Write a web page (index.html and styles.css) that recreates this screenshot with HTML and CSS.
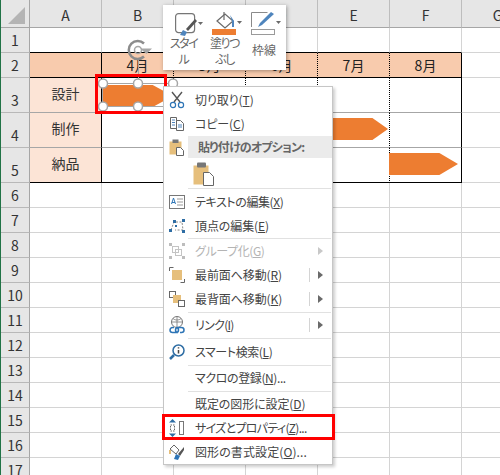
FILE: index.html
```html
<!DOCTYPE html>
<html lang="ja">
<head>
<meta charset="UTF-8">
<title>図形の右クリックメニュー</title>
<link rel="stylesheet" href="styles.css">
</head>
<body>
<div class="sheet">
  <table class="cells">
    <tr class="head"><th class="corner"><span class="corner-mark"></span></th><th>A</th><th>B</th><th>C</th><th>D</th><th>E</th><th>F</th><th>G</th></tr>
    <tr class="r25 top"><th>1</th><td></td><td></td><td></td><td></td><td></td><td></td><td class="free"></td></tr>
    <tr class="r25 months"><th>2</th><td class="a"></td><td class="m">4月</td><td class="m">5月</td><td class="m">6月</td><td class="m">7月</td><td class="m last">8月</td><td class="free"></td></tr>
    <tr class="r35 plan"><th>3</th><td class="a name">設計</td><td></td><td></td><td></td><td></td><td class="last"></td><td class="free"></td></tr>
    <tr class="r35 plan"><th>4</th><td class="a name">制作</td><td></td><td></td><td></td><td></td><td class="last"></td><td class="free"></td></tr>
    <tr class="r35 plan end"><th>5</th><td class="a name">納品</td><td></td><td></td><td></td><td></td><td class="last"></td><td class="free"></td></tr>
    <tr class="r25"><th>6</th><td></td><td></td><td></td><td></td><td></td><td></td><td></td></tr>
    <tr class="r25"><th>7</th><td></td><td></td><td></td><td></td><td></td><td></td><td></td></tr>
    <tr class="r25"><th>8</th><td></td><td></td><td></td><td></td><td></td><td></td><td></td></tr>
    <tr class="r25"><th>9</th><td></td><td></td><td></td><td></td><td></td><td></td><td></td></tr>
    <tr class="r25"><th>10</th><td></td><td></td><td></td><td></td><td></td><td></td><td></td></tr>
    <tr class="r25"><th>11</th><td></td><td></td><td></td><td></td><td></td><td></td><td></td></tr>
    <tr class="r25"><th>12</th><td></td><td></td><td></td><td></td><td></td><td></td><td></td></tr>
    <tr class="r25"><th>13</th><td></td><td></td><td></td><td></td><td></td><td></td><td></td></tr>
    <tr class="r25"><th>14</th><td></td><td></td><td></td><td></td><td></td><td></td><td></td></tr>
    <tr class="r25"><th>15</th><td></td><td></td><td></td><td></td><td></td><td></td><td></td></tr>
    <tr class="r25"><th>16</th><td></td><td></td><td></td><td></td><td></td><td></td><td></td></tr>
    <tr class="r25"><th>17</th><td></td><td></td><td></td><td></td><td></td><td></td><td></td></tr>
  </table>

  <!-- shapes on the sheet -->
  <div class="arrow arrow-b"></div>
  <div class="arrow arrow-e"></div>
  <div class="arrow arrow-f"></div>

  <svg class="selection" width="90" height="80" viewBox="0 0 90 80">
    <rect x="5.500" y="48.500" width="70" height="23" fill="none" stroke="#a6a6a6"/>
    <line x1="41.500" y1="24" x2="41.500" y2="48" stroke="#a6a6a6"/>
    <path d="M47 8.500A9 9 0 1 0 47 21.500" fill="none" stroke="#8c8c8c" stroke-width="2.500"/>
    <circle cx="41" cy="15" r="3.500" fill="none" stroke="#a6a6a6" stroke-width="1.500"/>
    <path d="M43 13.500h12l-5.500 5.500z" fill="#a6a6a6"/>
    <g fill="#fff" stroke="#a6a6a6" stroke-width="1.500">
      <circle cx="6" cy="48.500" r="4.500"/>
      <circle cx="41" cy="48.500" r="4.500"/>
      <circle cx="76" cy="48.500" r="4.500"/>
      <circle cx="6" cy="71.500" r="4.500"/>
      <circle cx="41" cy="71.500" r="4.500"/>
    </g>
  </svg>
  <div class="red-box shape-box"></div>

  <!-- mini toolbar -->
  <div class="toolbar">
    <div class="tool tool-style">
      <svg class="tool-icon" width="30" height="24" viewBox="0 0 30 24">
        <rect x="0.600" y="1.600" width="19" height="19" rx="3" fill="none" stroke="#767676" stroke-width="1.200"/>
        <path d="M5 23l3-5 4 2-2 4z" fill="#4f85bd"/>
        <path d="M11 17l9-10 2 2-9 10z" fill="#555"/>
        <path d="M23 10h5l-2.500 3z" fill="#6a6a6a"/>
      </svg>
      <span>スタイ<br>ル</span>
    </div>
    <div class="tool tool-fill">
      <svg class="tool-icon" width="30" height="24" viewBox="0 0 30 24">
        <path d="M5 9l8-7 8 7-8 7z" fill="#fff" stroke="#6a6a6a" stroke-width="1.200"/>
        <path d="M12 8V0" stroke="#6a6a6a" stroke-width="1.200"/>
        <path d="M18 3l4 6v6h-2V9z" fill="#4f85bd"/>
        <rect x="0" y="17" width="24" height="6" fill="#ed7d31"/>
        <path d="M25 9h5l-2.500 3z" fill="#6a6a6a"/>
      </svg>
      <span>塗りつ<br>ぶし</span>
    </div>
    <div class="tool tool-line">
      <svg class="tool-icon" width="30" height="24" viewBox="0 0 30 24">
        <path d="M0.500 15V0.500h16" fill="none" stroke="#8a8a8a"/>
        <path d="M7 15l2-4L20 0l3 2-12 11z" fill="#4f85bd"/>
        <rect x="0.500" y="17.500" width="23" height="5" fill="#fff" stroke="#9a9a9a"/>
        <path d="M25 9h5l-2.500 3z" fill="#6a6a6a"/>
      </svg>
      <span>枠線</span>
    </div>
  </div>

  <!-- context menu -->
  <ul class="menu">
    <li class="item first">
      <svg class="ico" width="16" height="18" viewBox="0 0 16 18"><path d="M3 1l8 10M13 1L5 11" stroke="#555" stroke-width="1.400" fill="none"/><circle cx="4" cy="14" r="2.600" fill="none" stroke="#2e75b6" stroke-width="1.200"/><circle cx="12" cy="14" r="2.600" fill="none" stroke="#2e75b6" stroke-width="1.200"/></svg>
      <span class="label">切り取り(<u>T</u>)</span>
    </li>
    <li class="item">
      <svg class="ico" width="16" height="16" viewBox="0 0 16 16"><path d="M1.500 1.500h6v11h-6z" fill="#fff" stroke="#666"/><path d="M7.500 4.500h4l3 3v7h-7z" fill="#fff" stroke="#666"/><path d="M3 4h3M3 6.500h3M3 9h3M9 9h4M9 11h4" stroke="#4f85bd"/></svg>
      <span class="label">コピー(<u>C</u>)</span>
    </li>
    <li class="item heading">
      <svg class="ico" width="16" height="17" viewBox="0 0 16 17"><rect x="0.500" y="2.500" width="12" height="13" fill="#e6bf7c"/><rect x="3.500" y="0.500" width="6" height="3.500" fill="#777"/><path d="M7.500 8.500h4l3 3v5h-7z" fill="#fff" stroke="#666"/></svg>
      <span class="label">貼り付けのオプション:</span>
    </li>
    <li class="paste-row">
      <svg width="22" height="24" viewBox="0 0 22 24"><rect x="0.500" y="3.500" width="15" height="19" fill="#e6bf7c"/><rect x="4" y="0.500" width="9" height="5" rx="1" fill="#777"/><path d="M10.500 10.500h6l4 4v9h-10z" fill="#fff" stroke="#666"/></svg>
    </li>
    <li class="sep flush gap"></li>
    <li class="item">
      <svg class="ico" width="16" height="14" viewBox="0 0 16 14"><rect x="0.500" y="0.500" width="15" height="13" fill="#fff" stroke="#777"/><path d="M2.500 9l2-6 2 6M3 7.500h3" stroke="#2e75b6" fill="none"/><path d="M8 4h6M8 7h6M8 10h6" stroke="#999"/></svg>
      <span class="label narrow">テキストの編集(<u>X</u>)</span>
    </li>
    <li class="item">
      <svg class="ico" width="16" height="14" viewBox="0 0 16 14"><path d="M2 11L5 3h8l1 8H6" fill="none" stroke="#888" stroke-dasharray="2 1.500"/><path d="M0 10h3v3H0zM4 1h3v3H4zM13 0h3v3h-3zM13 11h3v3h-3zM6 6h2v2H6z" fill="#2e6da4"/></svg>
      <span class="label">頂点の編集(<u>E</u>)</span>
    </li>
    <li class="sep flush"></li>
    <li class="item off">
      <svg class="ico" width="16" height="16" viewBox="0 0 16 16"><path d="M0 0h3v3H0zM13 0h3v3h-3zM0 13h3v3H0zM13 13h3v3h-3z" fill="#bdbdbd"/><rect x="3.500" y="3.500" width="6" height="6" fill="none" stroke="#c4c4c4"/><rect x="6.500" y="6.500" width="6" height="6" fill="none" stroke="#c4c4c4"/></svg>
      <span class="label narrow">グループ化(<u>G</u>)</span>
      <i class="more"></i>
    </li>
    <li class="item split">
      <svg class="ico" width="16" height="16" viewBox="0 0 16 16"><path d="M0.500 4V0.500h4M15.500 12v3.500h-4" fill="none" stroke="#666"/><rect x="3" y="3" width="10" height="10" fill="#e6bf7c"/></svg>
      <span class="label">最前面へ移動(<u>R</u>)</span>
      <i class="more"></i>
    </li>
    <li class="item split">
      <svg class="ico" width="16" height="16" viewBox="0 0 16 16"><rect x="0.500" y="0.500" width="6" height="6" fill="#fff" stroke="#666"/><rect x="4" y="4" width="8" height="8" fill="#e6bf7c"/><rect x="9.500" y="9.500" width="6" height="6" fill="#fff" stroke="#666"/></svg>
      <span class="label">最背面へ移動(<u>K</u>)</span>
      <i class="more"></i>
    </li>
    <li class="sep"></li>
    <li class="item split">
      <svg class="ico" width="16" height="18" viewBox="0 0 16 18"><circle cx="8" cy="6" r="5.500" fill="#fff" stroke="#777"/><path d="M2.500 6h11M8 .5v11M4 2.500c2 2 6 2 8 0" fill="none" stroke="#777" stroke-width=".8"/><path d="M5 11.500H3.500a2.500 2.500 0 0 0 0 5H7a2.500 2.500 0 0 0 0-5M11 16.500h1.500a2.500 2.500 0 0 0 0-5H9a2.500 2.500 0 0 0 0 5" fill="none" stroke="#2e75b6" stroke-width="1.500"/></svg>
      <span class="label narrower">リンク(<u>I</u>)</span>
      <i class="more"></i>
    </li>
    <li class="sep gap"></li>
    <li class="item">
      <svg class="ico" width="16" height="16" viewBox="0 0 16 16"><circle cx="9.500" cy="6.500" r="5.500" fill="#fff" stroke="#2e6da4" stroke-width="1.500"/><path d="M5 11l-4 4" stroke="#2e6da4" stroke-width="2.500"/><path d="M9.500 6v3.500M9.500 3.200v1.300" stroke="#444" stroke-width="1.500"/></svg>
      <span class="label narrow">スマート検索(<u>L</u>)</span>
    </li>
    <li class="sep"></li>
    <li class="item">
      <span class="ico"></span>
      <span class="label narrow">マクロの登録(<u>N</u>)...</span>
    </li>
    <li class="sep"></li>
    <li class="item">
      <span class="ico"></span>
      <span class="label">既定の図形に設定(<u>D</u>)</span>
    </li>
    <li class="item">
      <svg class="ico" width="16" height="18" viewBox="0 0 16 18"><path d="M3.500 0L7 3.500H0zM3.500 18L7 14.500H0z" fill="#2e6da4"/><rect x="1.500" y="6" width="4" height="6" fill="#fff" stroke="#666" stroke-dasharray="1.500 1"/><rect x="10.500" y="2.500" width="4" height="13" fill="#fff" stroke="#777"/></svg>
      <span class="label narrower">サイズとプロパティ(<u>Z</u>)...</span>
    </li>
    <li class="item">
      <svg class="ico" width="16" height="16" viewBox="0 0 16 16"><path d="M1 5l4-4 5 5-3 4z" fill="#fff" stroke="#666"/><path d="M1 6v4" stroke="#e6bf7c" stroke-width="2"/><path d="M15 3l-6 7 2 2 4-6z" fill="#555"/><path d="M5 15l2-5 4 2-2 4z" fill="#2e75b6"/></svg>
      <span class="label wide">図形の書式設定(<u>O</u>)...</span>
    </li>
  </ul>
  <div class="red-box size-box"></div>
</div>
</body>
</html>
```
FILE: styles.css
```css
html, body {
  margin: 0;
  padding: 0;
  height: 475px;
  overflow: hidden;
  background-color: #fff;
}
body {
  font-family: "Noto Sans CJK JP", "Liberation Sans", sans-serif;
  color: #444;
}
.sheet {
  position: relative;
  width: 500px;
  height: 475px;
  overflow: hidden;
  border-left: 1px solid #217346;
  box-sizing: border-box;
}
.cells {
  border-collapse: separate;
  border-spacing: 0;
  table-layout: fixed;
  width: 499px;
  font-size: 14px;
}
.cells th {
  width: 29px;
  padding: 0;
  font-weight: 400;
  color: #333;
  line-height: 23px;
  vertical-align: bottom;
  background-color: #e6e6e6;
  border-right: 1px solid #a6a6a6;
  border-bottom: 1px solid #b8b8b8;
  box-sizing: border-box;
}
.cells td, .cells .head th {
  width: 72px;
  padding: 0;
  text-align: center;
  box-sizing: border-box;
  border-right: 1px solid #d4d4d4;
  border-bottom: 1px solid #d4d4d4;
}
.cells .head th {
  height: 28px;
  padding-top: 3px;
  vertical-align: middle;
  border-right-color: #bdbdbd;
  border-bottom: 1px solid #a6a6a6;
}
.cells .head th.corner {
  width: 29px;
  position: relative;
  border-right-color: #a6a6a6;
}
.corner-mark {
  position: absolute;
  right: 4px;
  bottom: 3px;
  width: 17px;
  height: 17px;
  background-color: #b4b4b4;
  clip-path: polygon(100% 0, 100% 100%, 0 100%);
}
.r25 { height: 25px; }
.r35 { height: 35px; }
.r25 th, .r35 th {
  height: inherit;
}
.top td { border-bottom-color: #000; }
.top td.free { border-bottom-color: #d4d4d4; }
.months td {
  background-color: #f8cbad;
  border-bottom: 1px solid #000;
  color: #222;
}
.months td.free, .plan td.free {
  background-color: #fff;
  border-bottom-color: #d4d4d4;
}
.months .a, .plan .a {
  border-right: 1px solid #000;
}
.months .m, .plan td {
  border-right: 1px dotted #000;
}
.plan td {
  border-bottom: 1px solid #a6a6a6;
}
.plan .name {
  background-color: #fce4d6;
  color: #333;
  padding-bottom: 5px;
}
.end td { border-bottom: 1px solid #000; }
.cells td.last { border-right: 1px solid #000; }
.cells td.free { border-right: 1px solid #d4d4d4; }

.arrow {
  position: absolute;
  background-color: #ed7d31;
}
.arrow-b {
  left: 102px;
  top: 85px;
  width: 70px;
  height: 22px;
  clip-path: polygon(0 0, 71% 0, 100% 50%, 71% 100%, 0 100%);
}
.arrow-e {
  left: 305px;
  top: 118px;
  width: 82px;
  height: 22px;
  clip-path: polygon(0 0, 81% 0, 100% 50%, 81% 100%, 0 100%);
}
.arrow-f {
  left: 388px;
  top: 153px;
  width: 69px;
  height: 22px;
  clip-path: polygon(0 0, 73% 0, 100% 50%, 73% 100%, 0 100%);
}
.selection {
  position: absolute;
  left: 96px;
  top: 35px;
}
.red-box {
  position: absolute;
  border: 3px solid #f00;
  box-sizing: border-box;
}
.shape-box {
  left: 94px;
  top: 74px;
  width: 72px;
  height: 40px;
}
.size-box {
  left: 161px;
  top: 414px;
  width: 173px;
  height: 26px;
}

.toolbar {
  position: absolute;
  left: 162px;
  top: 5px;
  width: 123px;
  height: 65px;
  display: flex;
  background-color: #fff;
  box-shadow: 1px 1px 4px rgba(0, 0, 0, 0.35);
  font-size: 12px;
  font-feature-settings: "palt";
  letter-spacing: -1.500px;
  color: #666;
}
.tool {
  width: 41px;
  padding-top: 7px;
  text-align: center;
  line-height: 16px;
  box-sizing: border-box;
}
.tool-icon {
  display: block;
  margin-bottom: -1px;
}
.tool-style .tool-icon { margin-left: 12px; }
.tool-fill .tool-icon { margin-left: 8px; }
.tool-line .tool-icon { margin-left: 6px; }
.tool-line span {
  display: block;
  padding-top: 7px;
  padding-right: 3px;
  letter-spacing: 0;
}

.menu {
  position: absolute;
  left: 162px;
  top: 86px;
  width: 170px;
  height: 379px;
  margin: 0;
  padding: 0;
  list-style: none;
  background-color: #fff;
  border: 1px solid #c6c6c6;
  box-sizing: border-box;
  box-shadow: 2px 2px 3px rgba(0, 0, 0, 0.2);
  font-size: 12px;
  font-feature-settings: "palt";
  letter-spacing: -0.100px;
  color: #444;
}
.item {
  position: relative;
  display: flex;
  align-items: center;
  height: 24px;
  line-height: 24px;
}
.first {
  height: 25px;
}
.ico {
  flex: none;
  width: 16px;
  margin: 0 10px 0 5px;
}
.label {
  white-space: nowrap;
}
.narrow { letter-spacing: -0.400px; }
.narrower { letter-spacing: -0.700px; }
.wide { letter-spacing: 0.100px; }
.sep {
  height: 1px;
  margin: 1px 1px 0 24px;
  background-color: #e1e1e1;
}
.sep.flush { margin-top: 0; }
.sep.gap { margin-bottom: 1px; }
.heading {
  height: 22px;
  font-weight: 700;
  color: #666;
}
.heading .label {
  flex: 1;
  align-self: stretch;
  line-height: 22px;
  margin-left: -7px;
  padding-left: 10px;
  letter-spacing: -0.800px;
  background-color: #ebebeb;
}
.paste-row {
  height: 30px;
  padding: 4px 0 0 29px;
  box-sizing: border-box;
}
.off { color: #b4b4b4; }
.more {
  position: absolute;
  right: 9px;
  top: 8px;
  border-left: 5px solid #6a6a6a;
  border-top: 4px solid transparent;
  border-bottom: 4px solid transparent;
}
.off .more { border-left-color: #c8c8c8; }
.split::after {
  content: "";
  position: absolute;
  right: 22px;
  top: 5px;
  height: 14px;
  border-left: 1px solid #d4d4d4;
}
```
